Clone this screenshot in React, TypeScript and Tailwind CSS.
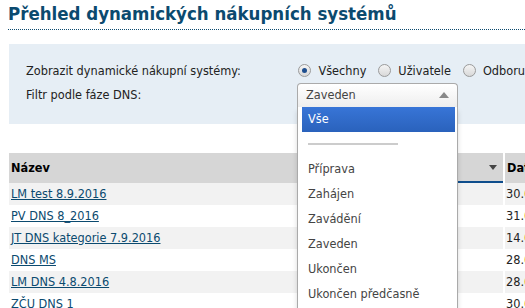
import React from "react";

const rows = [
  { name: "LM test 8.9.2016", date: "30." },
  { name: "PV DNS 8_2016", date: "31." },
  { name: "JT DNS kategorie 7.9.2016", date: "14." },
  { name: "DNS MS", date: "28." },
  { name: "LM DNS 4.8.2016", date: "28." },
  { name: "ZČU DNS 1", date: "30." },
];

const phases = ["Příprava", "Zahájen", "Zavádění", "Zaveden", "Ukončen", "Ukončen předčasně"];

function Radio({ checked, label }: { checked?: boolean; label: string }) {
  return (
    <label className="flex items-center">
      <span className="ml-[5px] mr-[7px] flex h-[13px] w-[13px] items-center justify-center rounded-full border border-[#9a9a9a] bg-gradient-to-b from-[#f4f4f4] to-[#d9d9d9]">
        {checked ? <span className="h-[5px] w-[5px] rounded-full bg-[#1f4f8f]" /> : null}
      </span>
      <span>{label}</span>
    </label>
  );
}

export default function App() {
  return (
    <div className="relative h-[308px] w-[525px] overflow-hidden bg-white font-['DejaVu_Sans_Condensed','DejaVu_Sans',sans-serif] text-[12.6px] text-[#222]">
      <h1 className="ml-2 border-b border-dotted border-[#0b4a6f] pt-[3px] pb-[4px] text-[18.5px] leading-[22px] font-bold whitespace-nowrap text-[#0b4a6f]">
        Přehled dynamických nákupních systémů
      </h1>

      <div className="mt-[14px] ml-[9px] h-[80px] bg-[#e6eef5] pt-[15px] pl-[17px]">
        <div className="flex h-[24px] items-center">
          <div className="w-[271px]">Zobrazit dynamické nákupní systémy:</div>
          <div className="flex items-center gap-[7px] whitespace-nowrap">
            <Radio checked label="Všechny" />
            <Radio label="Uživatele" />
            <Radio label="Odboru" />
          </div>
        </div>
        <div className="flex h-[24px] items-center">
          <div className="w-[271px]">Filtr podle fáze DNS:</div>
          <div className="relative mt-[-1px] w-[161px]">
            <div className="flex h-[24px] items-center justify-between rounded-t-[4px] border border-b-0 border-[#aaa] bg-gradient-to-b from-white to-[#eeeeee] pr-[8px] pl-[8px] text-[#444]">
              <span>Zaveden</span>
              <span className="h-0 w-0 border-x-[5px] border-b-[6px] border-x-transparent border-b-[#888]" />
            </div>
            <div className="absolute top-full left-0 z-10 h-[230px] w-full border border-t-0 border-[#aaa] bg-white pr-[2px] pl-[4px] text-[#444] shadow-[0_4px_5px_rgba(0,0,0,0.15)]">
              <div className="flex h-[25px] items-center bg-gradient-to-b from-[#3875d7] to-[#2a62bc] pl-[6px] text-white">Vše</div>
              <div className="flex h-[25px] items-center pl-[6px]">
                <span className="h-[2px] w-[90px] bg-[#cccccc]" />
              </div>
              {phases.map((p) => (
                <div key={p} className="flex h-[25px] items-center pl-[6px]">
                  {p}
                </div>
              ))}
            </div>
          </div>
        </div>
      </div>

      <div className="mt-[29px] ml-[9px]">
        <div className="grid h-[30px] grid-cols-[289px_205px_60px] bg-[#d6d6d6] font-bold text-black">
          <div className="flex items-center pl-[2px]">Název</div>
          <div className="flex items-center justify-between border-b-2 border-b-[#0e4d8c] pr-[6px] pl-[4px]">
            <span className="pl-[150px]">í</span>
            <span className="h-0 w-0 border-x-[4px] border-t-[5px] border-x-transparent border-t-[#444]" />
          </div>
          <div className="flex items-center border-l-2 border-white pl-[2px]">Datum</div>
        </div>
        {rows.map((r, i) => (
          <div
            key={r.name}
            className={`grid h-[22px] grid-cols-[289px_205px_60px] ${i % 2 === 0 ? "bg-[#f2f2f2]" : "bg-white"}`}
          >
            <div className="flex items-center pl-[2px]">
              <a href="#" className="text-[#0b4a6f] underline">
                {r.name}
              </a>
            </div>
            <div />
            <div className="flex items-center overflow-hidden border-l-2 border-white pl-[1px] whitespace-nowrap">
              {r.date}
              <span className="text-[#e08a00]">09.2016</span>
            </div>
          </div>
        ))}
      </div>
    </div>
  );
}
